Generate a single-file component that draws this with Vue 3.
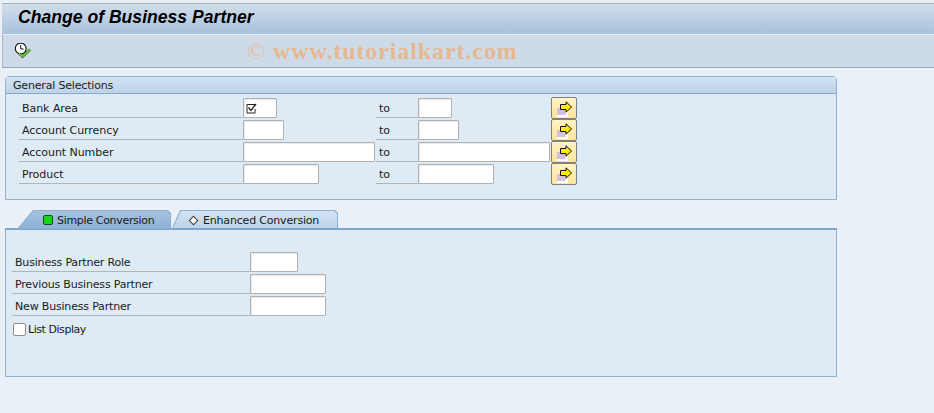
<script setup>
const selections = [
  { label: 'Bank Area', size: 'xs', checked: true },
  { label: 'Account Currency', size: 'sm' },
  { label: 'Account Number', size: 'lg' },
  { label: 'Product', size: 'md' }
]

const partnerFields = [
  { label: 'Business Partner Role', size: 'role' },
  { label: 'Previous Business Partner', size: 'md' },
  { label: 'New Business Partner', size: 'md' }
]
</script>

<template>
  <div class="screen">
    <div class="title-bar">
      <h1>Change of Business Partner</h1>
    </div>
    <div class="toolbar">
      <svg class="execute-icon" width="17" height="17" viewBox="0 0 17 17">
        <circle cx="6.7" cy="5.5" r="5.4" fill="#fff" stroke="#111" stroke-width="1.1" />
        <path d="M6.7 2V6H9.6" fill="none" stroke="#111" stroke-width="1" />
        <path d="M5.3 10.5L8.6 13.5L16 6.5" fill="none" stroke="#2c7d1e" stroke-width="2.8" />
        <path d="M5.3 10.5L8.6 13.5L16 6.5" fill="none" stroke="#8fd14f" stroke-width="1.1" />
      </svg>
      <span class="watermark"><span class="copyright">©</span> www.tutorialkart.com</span>
    </div>

    <div class="content">
      <section class="group">
        <div class="group-title">General Selections</div>
        <div class="selection-rows">
          <div v-for="row in selections" :key="row.label" class="selection-row">
            <label class="field-label">{{ row.label }}</label>
            <div class="input-cell">
              <div class="input" :class="row.size">
                <svg v-if="row.checked" width="11" height="11" viewBox="0 0 11 11">
                  <path d="M9 1.5H1V10H9V6" fill="none" stroke="#222" stroke-width="1" />
                  <path d="M2.5 4.5L5 7.5L10 1" fill="none" stroke="#222" stroke-width="1.3" />
                </svg>
              </div>
            </div>
            <span class="to-label">to</span>
            <div class="input-cell">
              <div class="input" :class="row.size"></div>
            </div>
            <button class="multi-btn" type="button">
              <svg width="19" height="17" viewBox="0 0 19 17">
                <rect x="2" y="8" width="11" height="9" fill="#fff" />
                <rect x="2" y="8" width="8.5" height="7" fill="#d2c0dc" />
                <path d="M5.5 4.5H11V1.8L16.5 7L11 12.2V9.5H5.5Z" fill="#ffec00" stroke="#111" stroke-width="1" />
              </svg>
            </button>
          </div>
        </div>
      </section>

      <div class="tabs">
        <div class="tab active">
          <span class="led"></span>
          <span class="tab-text">Simple Conversion</span>
        </div>
        <div class="tab">
          <span class="diamond"></span>
          <span class="tab-text">Enhanced Conversion</span>
        </div>
      </div>
      <section class="tab-panel">
        <div v-for="row in partnerFields" :key="row.label" class="partner-row">
          <label class="field-label">{{ row.label }}</label>
          <div class="input" :class="row.size"></div>
        </div>
        <div class="check-row">
          <span class="checkbox"></span>
          <span class="check-text">List Display</span>
        </div>
      </section>
    </div>
  </div>
</template>

<style>
html,
body {
  margin: 0;
  background: #e9f0f7;
}
</style>

<style scoped>
.screen {
  width: 934px;
  height: 413px;
  overflow: hidden;
  background: #e9f0f7;
  font-family: 'DejaVu Sans', sans-serif;
  font-size: 11px;
  letter-spacing: -0.18px;
  color: #1a1a1a;
  box-sizing: border-box;
  padding-top: 3px;
}

.title-bar {
  height: 31px;
  margin-left: 2px;
  border-top: 1px solid #a0b0c0;
  box-sizing: border-box;
  background: linear-gradient(#d2deea, #a9c1da);
  display: flex;
  align-items: center;
  padding: 0 0 3px 16px;
}

.title-bar h1 {
  margin: 0;
  font-family: 'Liberation Sans', sans-serif;
  font-size: 17.6px;
  font-weight: bold;
  font-style: italic;
  letter-spacing: 0;
  color: #000;
}

.toolbar {
  position: relative;
  height: 34px;
  margin-left: 2px;
  border-top: 1px solid #e6edf4;
  border-bottom: 1px solid #9aa8b6;
  border-left: 1px solid #a9b8c6;
  box-sizing: border-box;
  background: #cddbe8;
  display: flex;
  align-items: center;
  padding-left: 11px;
}

.watermark {
  position: absolute;
  left: 244px;
  top: 3px;
  font-family: 'Liberation Serif', serif;
  font-size: 24px;
  font-weight: bold;
  letter-spacing: 0.9px;
  color: #e6b88f;
  white-space: nowrap;
}

.copyright {
  font-weight: normal;
  opacity: 0.8;
}

.content {
  padding: 8px 0 0 5px;
  width: 832px;
}

.group {
  height: 124px;
  box-sizing: border-box;
  border: 1px solid #8fb1d2;
  border-top-left-radius: 4px;
  border-top-right-radius: 4px;
  background: #deeaf4;
}

.group-title {
  height: 16px;
  line-height: 17px;
  padding-left: 7px;
  border-bottom: 1px solid #8ba6c6;
  background: linear-gradient(#d2e2f1, #bcd3e9);
}

.selection-rows {
  padding: 4px 0 0 13px;
}

.selection-row {
  display: grid;
  grid-template-columns: 224px 133px 42px 133px 34px;
  height: 22px;
  letter-spacing: -0.05px;
}

.field-label {
  display: block;
  height: 19px;
  line-height: 21px;
  padding-left: 3px;
  border-bottom: 1px solid #b4b4b4;
}

.to-label {
  height: 19px;
  line-height: 21px;
  padding-left: 3px;
  border-bottom: 1px solid #b4b4b4;
}

.input-cell {
  display: flex;
}

.input {
  height: 20px;
  box-sizing: border-box;
  border: 1px solid #b0b0b0;
  border-radius: 1px;
  background: #fff;
  box-shadow: inset 1px 1px 0 #ececec;
  display: flex;
  align-items: center;
  padding-left: 2px;
}

.xs { width: 34px; }
.sm { width: 41px; }
.role { width: 48px; }
.md { width: 76px; }
.lg { width: 132px; }

.multi-btn {
  width: 26px;
  height: 22px;
  margin: -1px 0 0 0;
  padding: 0;
  border: 1px solid #7f7f7f;
  border-radius: 2px;
  background: linear-gradient(#fff3c4, #fde49b);
  display: flex;
  align-items: center;
  justify-content: center;
}

.tabs {
  display: flex;
  align-items: flex-end;
  height: 18px;
  margin-top: 10px;
  padding-left: 12px;
  gap: 1px;
}

.tab {
  position: relative;
  height: 18px;
  width: 166px;
  box-sizing: border-box;
  display: flex;
  align-items: center;
  padding: 2px 0 0 16px;
  gap: 5px;
  background: #8fb1d2;
  clip-path: polygon(8px 0, calc(100% - 3px) 0, 100% 3px, 100% 100%, 0 100%);
}

.tab::before {
  content: '';
  position: absolute;
  inset: 1px 1px 0 1px;
  clip-path: polygon(8px 0, calc(100% - 3px) 0, 100% 3px, 100% 100%, 0 100%);
  background: linear-gradient(#d4e3f1, #bcd3e9);
}

.tab.active {
  height: 19px;
  width: 154px;
  margin-bottom: -1px;
  padding: 1px 0 0 26px;
  gap: 4px;
  letter-spacing: -0.32px;
  clip-path: polygon(16px 0, calc(100% - 3px) 0, 100% 3px, 100% 100%, 0 100%);
}

.tab.active::before {
  clip-path: polygon(16px 0, calc(100% - 3px) 0, 100% 3px, 100% 100%, 0 100%);
  background: linear-gradient(#a6c3e0, #8cb0d4);
}

.tab-text,
.led,
.diamond {
  position: relative;
}

.led {
  width: 10px;
  height: 10px;
  box-sizing: border-box;
  border: 1px solid #1c4a1c;
  border-radius: 2px;
  background: #12d912;
}

.diamond {
  width: 7px;
  height: 7px;
  margin: 0 1px 0 2px;
  box-sizing: border-box;
  border: 1px solid #333;
  background: #fff;
  transform: rotate(45deg);
}

.tab-panel {
  height: 149px;
  box-sizing: border-box;
  border: 1px solid #8fb1d2;
  border-top: 2px solid #7fa4cb;
  background: #deeaf4;
  padding: 22px 0 0 6px;
}

.partner-row {
  display: flex;
  height: 22px;
}

.partner-row .field-label {
  width: 235px;
  padding-left: 3px;
}

.check-row {
  display: flex;
  align-items: center;
  gap: 2px;
  height: 22px;
  padding-left: 1px;
}

.check-text {
  letter-spacing: -0.45px;
}

.checkbox {
  width: 13px;
  height: 13px;
  box-sizing: border-box;
  border: 1px solid #8c8c8c;
  border-radius: 2px;
  background: #fff;
}
</style>
